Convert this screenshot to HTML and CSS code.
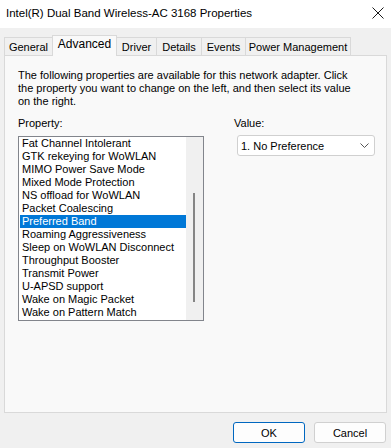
FILE: index.html
```html
<!DOCTYPE html>
<html lang="en">
<head>
    <meta charset="UTF-8">
    <title>Intel(R) Dual Band Wireless-AC 3168 Properties</title>
    <link rel="stylesheet" href="styles.css">
</head>
<body>
    <div class="titlebar">
        <span class="title">Intel(R) Dual Band Wireless-AC 3168 Properties</span>
        <svg class="close" width="12" height="12" viewBox="0 0 12 12">
            <path d="M0.5 0.5 L11.5 11.5 M11.5 0.5 L0.5 11.5" stroke="#1a1a1a" stroke-width="1" fill="none"/>
        </svg>
    </div>
    <div class="tabs">
        <div class="tab tab-general">General</div>
        <div class="tab tab-advanced active">Advanced</div>
        <div class="tab tab-driver">Driver</div>
        <div class="tab tab-details">Details</div>
        <div class="tab tab-events">Events</div>
        <div class="tab tab-power">Power Management</div>
    </div>
    <div class="panel">
        <p class="intro">The following properties are available for this network adapter. Click<br>the property you want to change on the left, and then select its value<br>on the right.</p>
        <div class="columns">
            <div class="property-col">
                <div class="label">Property:</div>
                <div class="listbox">
                    <ul class="items">
                        <li>Fat Channel Intolerant</li>
                        <li>GTK rekeying for WoWLAN</li>
                        <li>MIMO Power Save Mode</li>
                        <li>Mixed Mode Protection</li>
                        <li>NS offload for WoWLAN</li>
                        <li>Packet Coalescing</li>
                        <li class="selected">Preferred Band</li>
                        <li>Roaming Aggressiveness</li>
                        <li>Sleep on WoWLAN Disconnect</li>
                        <li>Throughput Booster</li>
                        <li>Transmit Power</li>
                        <li>U-APSD support</li>
                        <li>Wake on Magic Packet</li>
                        <li>Wake on Pattern Match</li>
                    </ul>
                    <div class="scrollbar">
                        <div class="thumb"></div>
                    </div>
                </div>
            </div>
            <div class="value-col">
                <div class="label">Value:</div>
                <div class="combo">
                    <span>1. No Preference</span>
                    <svg width="9" height="6" viewBox="0 0 9 6">
                        <path d="M0.5 0.5 L4.5 4.5 L8.5 0.5" stroke="#555" stroke-width="1" fill="none"/>
                    </svg>
                </div>
            </div>
        </div>
    </div>
    <div class="footer">
        <button class="btn btn-ok">OK</button>
        <button class="btn">Cancel</button>
    </div>
</body>
</html>
```

FILE: styles.css
```css
body {
    margin: 0;
    padding: 0;
    width: 391px;
    height: 448px;
    background: #f0f0f0;
    font-family: 'Liberation Sans', Arial, sans-serif;
    font-size: 11px;
    color: #000;
    overflow: hidden;
}

.titlebar {
    height: 28px;
    background: #fff;
    display: flex;
    align-items: center;
    justify-content: space-between;
    padding: 0 6px 0 6px;
}

.title {
    font-size: 11.5px;
    margin-top: -2px;
}

.close {
    margin-right: 1px;
    margin-top: -2px;
}

.tabs {
    display: flex;
    align-items: flex-end;
    height: 27px;
    padding-left: 4px;
    position: relative;
    z-index: 1;
}

.tab {
    height: 17px;
    line-height: 18px;
    border: 1px solid #d9d9d9;
    border-bottom: none;
    border-left: none;
    background: #f0f0f0;
    text-align: center;
    box-sizing: content-box;
}

.tab-general { width: 47px; border-left: 1px solid #d9d9d9; }
.tab-advanced { width: 63px; }
.tab-driver { width: 39px; }
.tab-details { width: 44px; }
.tab-events { width: 43px; }
.tab-power { width: 104px; }

.tab.active {
    height: 20px;
    line-height: 17px;
    background: #f9f9f9;
    margin-bottom: -1px;
    margin-left: -1px;
    border-left: 1px solid #d9d9d9;
    font-size: 12px;
}

.panel {
    margin: 0 4px 0 4px;
    border: 1px solid #d9d9d9;
    background: #f9f9f9;
    padding: 13px 13px 0 13px;
    box-sizing: border-box;
    height: 358px;
}

.intro {
    margin: 0;
    line-height: 13px;
    white-space: nowrap;
}

.columns {
    display: flex;
    margin-top: 9px;
}

.label {
    line-height: 13px;
}

.property-col {
    flex: none;
    width: 186px;
}

.listbox {
    margin-top: 6px;
    height: 185px;
    border: 1px solid #82858c;
    background: #fff;
    display: flex;
    box-sizing: border-box;
}

.items {
    list-style: none;
    margin: 0;
    padding: 0 0 0 1px;
    flex: 1;
}

.items li {
    line-height: 13px;
    height: 13px;
    padding-left: 2px;
    white-space: nowrap;
}

.items li.selected {
    background: #0078d7;
    color: #fff;
}

.scrollbar {
    width: 17px;
    background: #f0f0f0;
}

.thumb {
    width: 2px;
    height: 109px;
    margin: 56px 0 0 7px;
    background: #858585;
}

.value-col {
    flex: none;
    margin-left: 30px;
}

.combo {
    margin: 5px 0 0 3px;
    width: 138px;
    height: 21px;
    border: 1px solid #d0d0d0;
    border-radius: 3px;
    background: #fff;
    box-sizing: border-box;
    display: flex;
    align-items: center;
    justify-content: space-between;
    padding: 0 5px 0 3px;
    font-size: 11px;
}

.footer {
    display: flex;
    justify-content: flex-end;
    gap: 9px;
    padding: 9px 5px 0 0;
}

.btn {
    width: 72px;
    height: 21px;
    font-family: 'Liberation Sans', Arial, sans-serif;
    font-size: 11px;
    background: #fdfdfd;
    border: 1px solid #d0d0d0;
    border-radius: 3px;
    padding: 0;
    color: #000;
}

.btn-ok {
    border-color: #0067c0;
}
```
